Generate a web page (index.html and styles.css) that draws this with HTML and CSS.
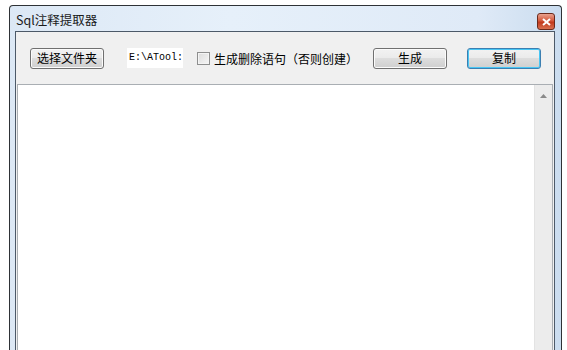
FILE: index.html
```html
<!DOCTYPE html>
<html lang="zh-CN">
<head>
    <meta charset="UTF-8">
    <title>Sql注释提取器</title>
    <link rel="stylesheet" href="styles.css">
</head>
<body>
    <div class="window">
        <div class="titlebar">
            <span class="title">Sql注释提取器</span>
            <span class="close">
                <svg width="9" height="8" viewBox="0 0 9 8">
                    <path d="M1 1 L8 7 M8 1 L1 7" stroke="#fff" stroke-width="2" fill="none"/>
                </svg>
            </span>
        </div>
        <div class="client">
            <div class="toolbar">
                <button class="btn btn-folder">选择文件夹</button>
                <div class="path">E:\ATool:</div>
                <label class="check">
                    <span class="box"></span>
                    生成删除语句（否则创建）
                </label>
                <button class="btn btn-gen">生成</button>
                <button class="btn btn-copy">复制</button>
            </div>
            <div class="editor">
                <div class="text"></div>
                <div class="scrollbar">
                    <svg width="7" height="4" viewBox="0 0 7 4">
                        <path d="M0 4 L3.5 0 L7 4 Z" fill="#8a8a8a"/>
                    </svg>
                </div>
            </div>
        </div>
    </div>
</body>
</html>
```

FILE: styles.css
```css
body {
    margin: 0;
    background: #fff;
    font-family: "Noto Sans CJK SC", "DejaVu Sans", sans-serif;
}
.window {
    box-sizing: border-box;
    margin: 5px 0 0 9px;
    width: 553px;
    height: 345px;
    border: 1px solid #2e3236;
    border-bottom: none;
    border-radius: 4px 4px 0 0;
    padding: 0 6px 0 5px;
    display: flex;
    flex-direction: column;
    background: linear-gradient(90deg, #dce8f5 0%, #e6f0fa 40%, #dfeaf7 85%, #cadcef 100%);
}
.titlebar {
    height: 25px;
    display: flex;
    align-items: center;
    justify-content: space-between;
    flex-shrink: 0;
}
.title {
    font-family: "Noto Sans CJK SC", sans-serif;
    font-size: 12.5px;
    color: #1a1a1a;
    margin-left: 1px;
    margin-top: 1px;
}
.close {
    width: 18px;
    height: 17px;
    margin-top: 6px;
    border: 1px solid #6b2a1c;
    border-radius: 3px;
    background: linear-gradient(#e9a28f 0%, #d4593c 45%, #c23a1d 55%, #d9704f 100%);
    display: flex;
    align-items: center;
    justify-content: center;
    box-sizing: border-box;
}
.client {
    flex: 1;
    border: 1px solid #4c5968;
    border-bottom: none;
    background: #f0f0f0;
    display: flex;
    flex-direction: column;
}
.toolbar {
    height: 52px;
    display: flex;
    align-items: center;
    padding-left: 14px;
    flex-shrink: 0;
}
.btn {
    box-sizing: border-box;
    flex-shrink: 0;
    height: 21px;
    width: 74px;
    padding: 0;
    border: 1px solid #707070;
    border-radius: 3px;
    background: linear-gradient(#f2f2f2 0%, #ebebeb 45%, #dddddd 50%, #cfcfcf 100%);
    font-family: "Noto Sans CJK SC", sans-serif;
    font-size: 12px;
    color: #000;
    line-height: 18px;
    box-shadow: inset 0 0 0 1px #fbfbfb;
}
.path {
    flex-shrink: 0;
    margin-left: 23px;
    width: 56px;
    height: 20px;
    background: #fff;
    font-family: "Liberation Mono", "DejaVu Sans Mono", monospace;
    font-size: 10px;
    line-height: 20px;
    padding-left: 2px;
    box-sizing: border-box;
    white-space: nowrap;
    overflow: hidden;
    color: #000;
}
.check {
    display: flex;
    align-items: center;
    flex-shrink: 0;
    width: 158px;
    margin-left: 14px;
    font-size: 12px;
    color: #000;
    white-space: nowrap;
}
.box {
    box-sizing: border-box;
    flex-shrink: 0;
    width: 13px;
    height: 13px;
    border: 1px solid #8e8f8f;
    background: linear-gradient(135deg, #dcdcdc, #f6f6f6);
    box-shadow: inset 0 0 0 1px #f4f4f4;
    margin-right: 4px;
}
.btn-gen {
    margin-left: 18px;
}
.btn-copy {
    margin-left: 20px;
    border-color: #3c7fb1;
    box-shadow: inset 0 0 0 1px #48c6f4;
}
.editor {
    flex: 1;
    margin-left: 1px;
    margin-right: 1px;
    border: 1px solid #a9aeb3;
    border-bottom: none;
    background: #fff;
    display: flex;
}
.text {
    flex: 1;
}
.scrollbar {
    width: 18px;
    background: #ececec;
    border-left: 1px solid #e3e3e3;
    display: flex;
    justify-content: center;
    padding-top: 9px;
    box-sizing: border-box;
}
```
